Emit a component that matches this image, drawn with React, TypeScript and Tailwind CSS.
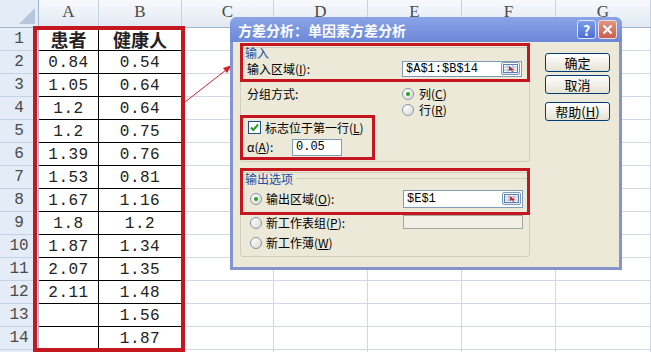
import type { ReactNode } from "react";

const LETTERS = ["A", "B", "C", "D", "E", "F", "G"];

const COL_A = ["0.84", "1.05", "1.2", "1.2", "1.39", "1.53", "1.67", "1.8", "1.87", "2.07", "2.11", "", ""];
const COL_B = ["0.54", "0.64", "0.64", "0.75", "0.76", "0.81", "1.16", "1.2", "1.34", "1.35", "1.48", "1.56", "1.87"];

const RED = "border-[#c5171f]";

function RowHead({ n }: { n: number | null }) {
  return (
    <div className="flex items-center justify-center border-b border-r border-b-[#c5d2e3] border-r-[#9eb6ce] bg-[#e4ecf7] text-[16px] text-[#4a4a4a]">
      {n}
    </div>
  );
}

function Radio({ checked = false }: { checked?: boolean }) {
  return (
    <span className="flex h-[12px] w-[12px] shrink-0 items-center justify-center rounded-full border border-[#8593a8] bg-gradient-to-br from-white to-[#dcdcd4]">
      {checked ? <span className="h-[4px] w-[4px] rounded-full bg-[#2aa22a]" /> : null}
    </span>
  );
}

function RangeBtn() {
  return (
    <span className="ml-auto mr-px flex h-[13px] w-[19px] items-center justify-center rounded-[2px] border border-[#7f9db9] bg-gradient-to-b from-white to-[#dfe6ef]">
      <svg width="15" height="9" viewBox="0 0 15 9">
        <rect x="0.5" y="0.5" width="14" height="8" fill="#fff" stroke="#5c7fb3" />
        <path d="M1 3h13M1 6h13M5 1v7M10 1v7" stroke="#9db3d6" strokeWidth="1" />
        <path d="M6 2l5 4-2 0 1 2-1 0-1-2-2 1z" fill="#c0282e" />
      </svg>
    </span>
  );
}

function TextBox({ children, w, h }: { children?: ReactNode; w: string; h: string }) {
  return (
    <div className={`flex items-center border border-[#7f9db9] bg-white pl-[3px] font-['Liberation_Mono',monospace] text-[12px] ${w} ${h}`}>
      {children}
    </div>
  );
}

function XpButton({ children }: { children: ReactNode }) {
  return (
    <div className="flex h-[19px] w-[65px] items-center justify-center rounded-[3px] border border-[#003c74] bg-gradient-to-b from-white to-[#e6e3d3] text-[13px]">
      {children}
    </div>
  );
}

function Dialog() {
  return (
    <div className="absolute left-[230px] top-[17px] flex h-[253px] w-[392px] flex-col rounded-t-[7px] bg-[#8593cf] px-[3px] pb-[3px] font-['Noto_Sans_CJK_SC',sans-serif] text-[12px] leading-none text-black">
      {/* title bar */}
      <div className="-mx-[3px] flex h-[25px] items-center rounded-t-[7px] bg-gradient-to-b from-[#8aa4e6] to-[#6c88d8] pl-[8px] pr-[5px]">
        <span className="text-[14px] font-bold text-white">方差分析：单因素方差分析</span>
        <div className="ml-auto flex gap-[2px]">
          <div className="flex h-[19px] w-[19px] items-center justify-center rounded-[3px] border border-[#dfe6f6] bg-gradient-to-b from-[#7d9de6] to-[#4b6fd0] text-[14px] font-bold text-white">
            ?
          </div>
          <div className="flex h-[19px] w-[19px] items-center justify-center rounded-[3px] border border-[#f1dcd8] bg-gradient-to-b from-[#e19484] to-[#c95e4e]">
            <svg width="11" height="11" viewBox="0 0 11 11">
              <path d="M1.5 1.5l8 8M9.5 1.5l-8 8" stroke="#fff" strokeWidth="2.2" />
            </svg>
          </div>
        </div>
      </div>

      {/* body */}
      <div className="flex flex-1 items-start bg-[#ece9d8] pl-[7px]">
        <div className="flex w-[290px] flex-col pt-[5px]">
          {/* input group */}
          <div className="flex h-[115px] flex-col rounded-[3px] border border-[#d0cfbf]">
            <div className={`-mx-px -mt-[5px] flex h-[39px] flex-col border-[3px] ${RED}`}>
              <div className="h-[14px] pl-[2px] leading-[14px] text-[#1c4fa3]">输入</div>
              <div className="flex h-[17px] items-center">
                <span className="w-[159px] pl-[4px]">
                  输入区域(<u>I</u>):
                </span>
                <TextBox w="w-[120px]" h="h-[16px]">
                  $A$1:$B$14
                  <RangeBtn />
                </TextBox>
              </div>
            </div>
            <div className="mt-[4px] flex h-[16px] items-center">
              <span className="w-[161px] pl-[6px]">分组方式:</span>
              <Radio checked />
              <span className="ml-[5px]">
                列(<u>C</u>)
              </span>
            </div>
            <div className="flex h-[16px] items-center pl-[161px]">
              <Radio />
              <span className="ml-[5px]">
                行(<u>R</u>)
              </span>
            </div>
            <div className={`-ml-px -mt-[3px] flex h-[45px] w-[135px] flex-col border-[3px] ${RED}`}>
              <div className="flex h-[19px] items-center pl-[5px]">
                <span className="flex h-[13px] w-[13px] items-center justify-center border border-[#1c5180] bg-white">
                  <svg width="9" height="9" viewBox="0 0 9 9">
                    <path d="M1 4.5l2.3 2.5L8 1.5" fill="none" stroke="#21a121" strokeWidth="2" />
                  </svg>
                </span>
                <span className="ml-[4px]">
                  标志位于第一行(<u>L</u>)
                </span>
              </div>
              <div className="flex h-[20px] items-center">
                <span className="w-[49px] pl-[4px]">
                  α(<u>A</u>):
                </span>
                <TextBox w="w-[50px]" h="h-[17px]">
                  0.05
                </TextBox>
              </div>
            </div>
          </div>

          {/* output group */}
          <div className="mt-[10px] flex h-[85px] flex-col rounded-[3px] border border-[#d0cfbf]">
            <div className={`-mx-px -mt-[5px] flex h-[47px] flex-col border-[3px] ${RED}`}>
              <div className="flex h-[15px] items-center pl-[2px]">
                <span className="text-[#1c4fa3]">输出选项</span>
                <span className="ml-[4px] h-px flex-1 bg-[#d0cfbf]" />
              </div>
              <div className="mt-[3px] flex h-[19px] items-center">
                <div className="flex w-[160px] items-center pl-[7px]">
                  <Radio checked />
                  <span className="ml-[4px]">
                    输出区域(<u>O</u>):
                  </span>
                </div>
                <TextBox w="w-[120px]" h="h-[18px]">
                  $E$1
                  <RangeBtn />
                </TextBox>
              </div>
            </div>
            <div className="flex h-[16px] items-center">
              <div className="flex w-[162px] items-center pl-[9px]">
                <Radio />
                <span className="ml-[4px]">
                  新工作表组(<u>P</u>):
                </span>
              </div>
              <div className="h-[14px] w-[120px] self-start border border-[#a5a69c] bg-[#f1efe6]" />
            </div>
            <div className="mt-[4px] flex h-[16px] items-center pl-[9px]">
              <Radio />
              <span className="ml-[4px]">
                新工作薄(<u>W</u>)
              </span>
            </div>
          </div>
        </div>

        {/* buttons */}
        <div className="ml-[15px] flex flex-col pt-[11px]">
          <XpButton>确定</XpButton>
          <div className="mt-[3px]">
            <XpButton>取消</XpButton>
          </div>
          <div className="mt-[8px]">
            <XpButton>
              帮助(<u>H</u>)
            </XpButton>
          </div>
        </div>
      </div>
    </div>
  );
}

export default function App() {
  const rows = Array.from({ length: 15 }, (_, i) => i + 1);

  return (
    <div className="relative h-[352px] w-[651px] overflow-hidden bg-white font-['Liberation_Mono',monospace] text-[#222]">
      <div className="grid grid-cols-[39px_60px_83px_92px_94px_94px_94px_95px] grid-rows-[28px_repeat(15,23px)]">
        {/* select-all corner */}
        <div className="relative border-b border-r border-[#9eb6ce] bg-[#e4ecf7]">
          <svg className="absolute bottom-[3px] right-[3px]" width="16" height="16" viewBox="0 0 16 16">
            <path d="M16 0V16H0z" fill="#b7c6dc" />
          </svg>
        </div>
        {LETTERS.map((l) => (
          <div
            key={l}
            className="flex items-end justify-center border-b border-r border-b-[#9eb6ce] border-r-[#c5d2e3] bg-gradient-to-b from-[#f7f9fc] to-[#e2e9f4] pb-[3px] font-['Liberation_Serif',serif] text-[17px] text-[#4a4a4a]"
          >
            {l}
          </div>
        ))}

        {rows.map((r) => {
          const a = r === 1 ? "患者" : COL_A[r - 2] ?? "";
          const b = r === 1 ? "健康人" : COL_B[r - 2] ?? "";
          const head =
            r === 1
              ? "font-['Noto_Sans_CJK_SC',sans-serif] text-[18px] font-bold"
              : "text-[16px] tracking-[0.5px] pt-[2px]";
          return [
            <RowHead key={`h${r}`} n={r <= 14 ? r : null} />,
            <div key={`a${r}`} className={`flex items-center justify-center border-b border-r border-black ${head}`}>
              {a}
            </div>,
            <div key={`b${r}`} className={`flex items-center justify-center border-b border-r border-black ${head}`}>
              {b}
            </div>,
            ...[0, 1, 2, 3, 4].map((c) => (
              <div key={`c${r}-${c}`} className="border-b border-r border-[#d0d7e5]" />
            )),
          ];
        })}
      </div>

      {/* annotation: red box around data */}
      <div className={`absolute left-[33px] top-[26px] h-[326px] w-[152px] border-4 ${RED}`} />

      {/* annotation arrow */}
      <svg className="absolute left-0 top-0" width="651" height="352" viewBox="0 0 651 352">
        <line x1="185" y1="102" x2="226" y2="70" stroke="#d0232a" strokeWidth="1" />
        <path d="M232 65l-9 3 4 5z" fill="#d0232a" />
      </svg>

      <Dialog />
    </div>
  );
}
